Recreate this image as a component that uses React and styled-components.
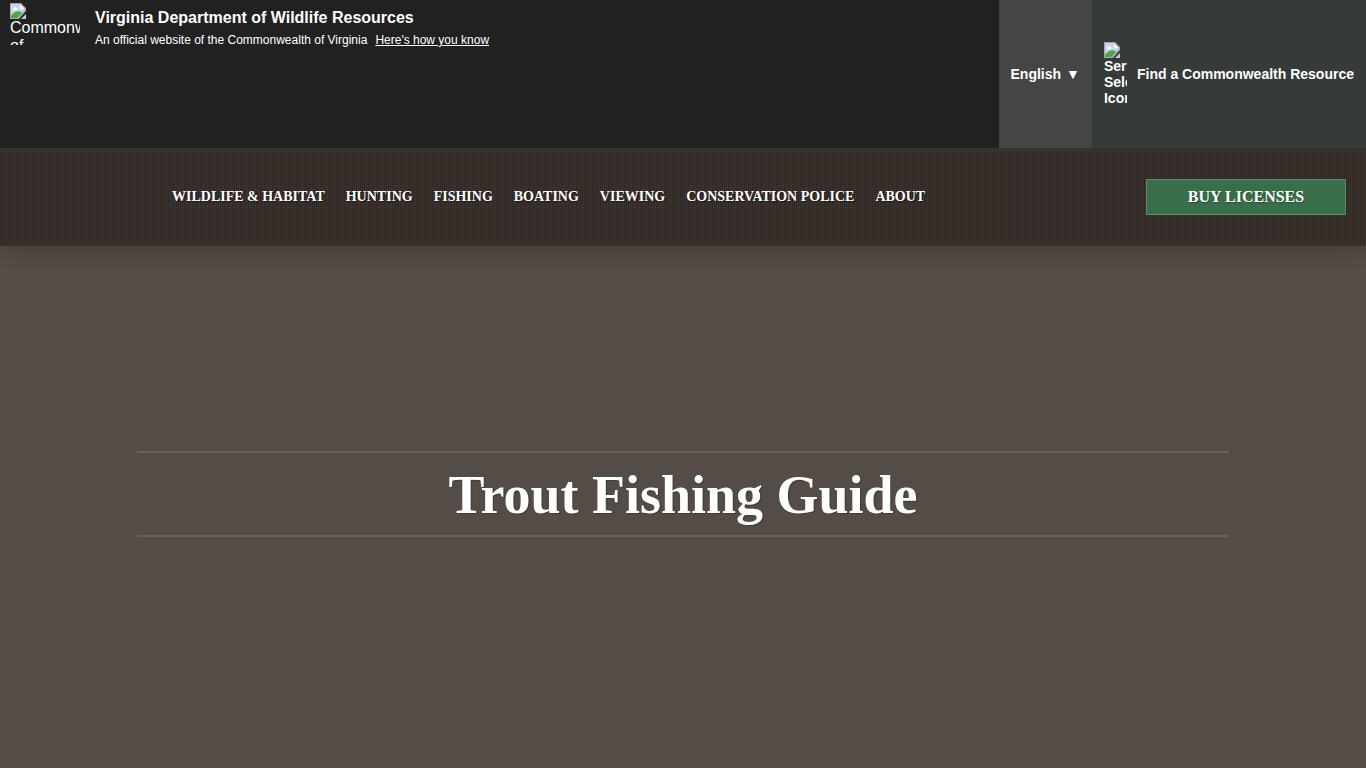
import React from "react";
import styled, { createGlobalStyle } from "styled-components";

const GlobalStyle = createGlobalStyle`
  * { box-sizing: border-box; }
  body {
    margin: 0;
    background: #544c46;
    color: #fff;
    font-family: "Liberation Serif", "Times New Roman", serif;
  }
`;

const Page = styled.div`
  display: flex;
  flex-direction: column;
  min-height: 100vh;
`;

const TopBar = styled.div`
  position: relative;
  z-index: 1;
  display: flex;
  justify-content: space-between;
  background: #212121;
  font-family: "Liberation Sans", Arial, sans-serif;
`;

const Agency = styled.div`
  display: flex;
  align-items: flex-start;
  gap: 15px;
  padding: 3px 10px;
`;

const AltBox = styled.span`
  display: block;
  flex: none;
  overflow: hidden;
  width: ${(p) => p.$width};
  height: ${(p) => p.$height};
  font-size: ${(p) => p.$size};
  line-height: ${(p) => p.$line};
  text-align: left;
  white-space: normal;

  svg { display: block; }
`;

const AgencyText = styled.div`
  padding-top: 5px;
`;

const AgencyName = styled.div`
  font-size: 16px;
  font-weight: 700;
  line-height: 20px;
`;

const Official = styled.div`
  display: flex;
  gap: 8px;
  margin-top: 2px;
  font-size: 12px;
  line-height: 20px;
`;

const KnowButton = styled.button`
  padding: 0;
  border: 0;
  background: none;
  color: inherit;
  font: inherit;
  text-decoration: underline;
  cursor: pointer;
`;

const Tools = styled.div`
  display: flex;
`;

const ToolButton = styled.button`
  display: flex;
  align-items: center;
  gap: ${(p) => p.$gap};
  padding: 42px 12px;
  border: 0;
  background: ${(p) => p.$background};
  color: #fff;
  font: 700 14px/16px "Liberation Sans", Arial, sans-serif;
  white-space: nowrap;
  cursor: pointer;
`;

const NavBar = styled.header`
  position: relative;
  display: flex;
  align-items: center;
  justify-content: space-between;
  padding: 27px 20px 31px 172px;
  border-top: 4px solid #333331;
  background-color: #403632;
  background-image:
    repeating-linear-gradient(to right, rgba(0, 0, 0, 0.2) 0 1px, transparent 1px 2px),
    repeating-linear-gradient(to bottom, rgba(0, 0, 0, 0.12) 0 1px, transparent 1px 2px);
  box-shadow: 0 0 20px rgba(0, 0, 0, 0.3);
`;

const Menu = styled.ul`
  display: flex;
  gap: 21px;
  margin: 0;
  padding: 0;
  list-style: none;
`;

const MenuLink = styled.a`
  color: #fff;
  font-size: 14px;
  font-weight: 700;
  line-height: 20px;
  text-decoration: none;
  text-transform: uppercase;
  text-shadow: 1px 1px 1px rgba(0, 0, 0, 0.5);
  white-space: nowrap;
`;

const BuyLink = styled.a`
  width: 200px;
  border: 1px solid #5a8a68;
  background: #386e49;
  color: #fff;
  font-size: 16px;
  font-weight: 700;
  line-height: 34px;
  text-align: center;
  text-decoration: none;
  text-transform: uppercase;
  text-shadow: 1px 1px 1px rgba(0, 0, 0, 0.3);
`;

const Hero = styled.main`
  display: flex;
  flex: 1;
  align-items: center;
  justify-content: center;
  padding-bottom: 26px;
`;

const Title = styled.h1`
  width: 80%;
  margin: 0;
  padding: 10px 0 8px;
  border: solid #6a615c;
  border-width: 2px 0;
  font-size: 54px;
  font-weight: 700;
  line-height: 64px;
  text-align: center;
  text-shadow: 1px 1px 1px rgba(0, 0, 0, 0.25);
`;

const sections = [
  "Wildlife & Habitat",
  "Hunting",
  "Fishing",
  "Boating",
  "Viewing",
  "Conservation Police",
  "About",
];

function BrokenIcon() {
  return (
    <svg width="16" height="16" viewBox="0 0 16 16" aria-hidden="true">
      <path d="M0 0h11l5 5v3l-7 8H0z" fill="#a5a5a5" />
      <path d="M1 1h9v5h5v1l-8 8H1z" fill="#c6d5f5" />
      <path d="M10 1v5h5z" fill="#f5f5f5" />
      <path d="M3 6c0-2 3-2 3-1 2 0 2 2 0 2H3z" fill="#fff" />
      <path d="M1 15v-2c3-5 8-6 11-3l-5 5z" fill="#4da63f" />
      <path d="M16 11v5h-5z" fill="#c5cbd6" />
    </svg>
  );
}

export default function App() {
  return (
    <Page>
      <GlobalStyle />
      <TopBar>
        <Agency>
          <AltBox $width="70px" $height="42px" $size="16px" $line="18px">
            <BrokenIcon />
            Commonwealth of Virginia
          </AltBox>
          <AgencyText>
            <AgencyName>Virginia Department of Wildlife Resources</AgencyName>
            <Official>
              <span>An official website of the Commonwealth of Virginia</span>
              <KnowButton type="button">Here's how you know</KnowButton>
            </Official>
          </AgencyText>
        </Agency>
        <Tools>
          <ToolButton type="button" $gap="5px" $background="#454545">
            <span>English</span>
            <span>▼</span>
          </ToolButton>
          <ToolButton type="button" $gap="10px" $background="#363a38">
            <AltBox $width="23px" $height="64px" $size="14px" $line="16px">
              <BrokenIcon />
              Service Selector Icon
            </AltBox>
            <span>Find a Commonwealth Resource</span>
          </ToolButton>
        </Tools>
      </TopBar>
      <NavBar>
        <nav aria-label="Main">
          <Menu>
            {sections.map((name) => (
              <li key={name}>
                <MenuLink href="#">{name}</MenuLink>
              </li>
            ))}
          </Menu>
        </nav>
        <BuyLink href="#">Buy Licenses</BuyLink>
      </NavBar>
      <Hero>
        <Title>Trout Fishing Guide</Title>
      </Hero>
    </Page>
  );
}
